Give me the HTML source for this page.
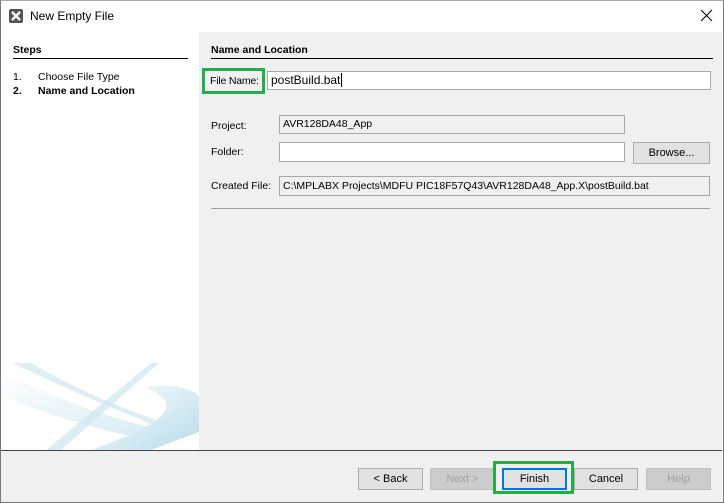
<!DOCTYPE html><html><head><style>
*{margin:0;padding:0;box-sizing:border-box}
body{width:724px;height:503px;background:#fff;font-family:"Liberation Sans",Tahoma,sans-serif;font-size:10.5px;color:#000;position:relative;overflow:hidden}
.a{position:absolute}
.fld{position:absolute;border:1px solid #a8a8a8;background:#fff;padding-left:3px;line-height:18px;white-space:nowrap}
.ro{background:#f0f0f0}
.btn{position:absolute;height:22px;border:1px solid #adadad;background:#e1e1e1;text-align:center;line-height:20px;font-size:11px}
.dis{color:#a0a0a0;background:#ccc;border-color:#bfbfbf}
</style></head><body>
<div class="a" style="left:0;top:0;width:724px;height:503px;border:1px solid #777;border-top:1px solid #aaa"></div>
<svg class="a" style="left:8px;top:8px" width="16" height="16" viewBox="0 0 16 16"><rect x="1" y="1" width="14" height="14" rx="2" fill="#555"/><path d="M4 4L12 12M12 4L4 12" stroke="#fff" stroke-width="2.4"/></svg>
<div class="a" style="left:30px;top:9px;font-size:12px">New Empty File</div>
<svg class="a" style="left:700px;top:9px" width="13" height="13"><path d="M1 1L12 12M12 1L1 12" stroke="#000" stroke-width="1"/></svg>
<div class="a" style="left:199px;top:32px;width:523px;height:419px;background:#f0f0f0"></div>
<div class="a" style="left:1px;top:450px;width:721px;height:52px;background:#f0f0f0;border-top:1px solid #444"></div>
<svg class="a" style="left:1px;top:362px" width="198" height="88" viewBox="0 0 198 88">
<defs><linearGradient id="g" x1="0" y1="0" x2="1" y2="1"><stop offset="0" stop-color="#fff"/><stop offset="1" stop-color="#b7dcea"/></linearGradient></defs>
<path d="M3 10 C60 40,120 60,170 70 L160 80 C100 70,40 50,3 35Z" fill="url(#g)" opacity=".6"/>
<path d="M12 1 L30 1 C80 30,120 45,160 60 L150 62 C110 45,60 25,12 1Z" fill="#d6eaf2" opacity=".8"/>
<path d="M45 88 L150 1 L158 1 L60 88Z" fill="#cfe6ef" opacity=".7"/>
<path d="M145 25 C175 20,198 30,198 35 L198 70 L150 88 L90 88 C140 70,170 55,165 40 C160 32,150 28,145 25Z" fill="url(#g)"/>
</svg>
<div class="a" style="left:13px;top:44px;font-weight:bold">Steps</div>
<div class="a" style="left:13px;top:58px;width:175px;border-top:1px solid #000"></div>
<div class="a" style="left:13px;top:71px">1.</div><div class="a" style="left:38px;top:71px">Choose File Type</div>
<div class="a" style="left:13px;top:85px;font-weight:bold">2.</div><div class="a" style="left:38px;top:85px;font-weight:bold">Name and Location</div>
<div class="a" style="left:211px;top:44px;font-weight:bold">Name and Location</div>
<div class="a" style="left:211px;top:58px;width:502px;border-top:1px solid #000"></div>
<div class="a" style="left:202px;top:68px;width:63px;height:26px;border:3px solid #22ae48"></div>
<div class="a" style="left:210px;top:75px;letter-spacing:-0.2px">File Name:</div>
<div class="fld" style="left:267px;top:71px;width:444px;height:19px;font-size:12px;line-height:17px">postBuild.bat<span style="border-left:1px solid #000;margin-left:1px"></span></div>
<div class="a" style="left:211px;top:120px">Project:</div>
<div class="fld ro" style="left:279px;top:115px;width:346px;height:19px;line-height:17px">AVR128DA48_App</div>
<div class="a" style="left:211px;top:146px">Folder:</div>
<div class="fld" style="left:279px;top:142px;width:346px;height:20px"></div>
<div class="btn" style="left:633px;top:142px;width:77px">Browse...</div>
<div class="a" style="left:211px;top:180px">Created File:</div>
<div class="fld ro" style="left:279px;top:176px;width:431px;height:20px">C:\MPLABX Projects\MDFU PIC18F57Q43\AVR128DA48_App.X\postBuild.bat</div>
<div class="a" style="left:211px;top:208px;width:499px;border-top:1px solid #a0a0a0"></div>
<div class="btn" style="left:358px;top:468px;width:65px">&lt; Back</div>
<div class="btn dis" style="left:430px;top:468px;width:65px">Next &gt;</div>
<div class="a" style="left:493px;top:461px;width:81px;height:33px;border:3px solid #22ae48"></div>
<div class="btn" style="left:502px;top:468px;width:65px;border:2px solid #0078d7;line-height:18px">Finish</div>
<div class="btn" style="left:574px;top:468px;width:64px">Cancel</div>
<div class="btn dis" style="left:646px;top:468px;width:65px">Help</div>
</body></html>
